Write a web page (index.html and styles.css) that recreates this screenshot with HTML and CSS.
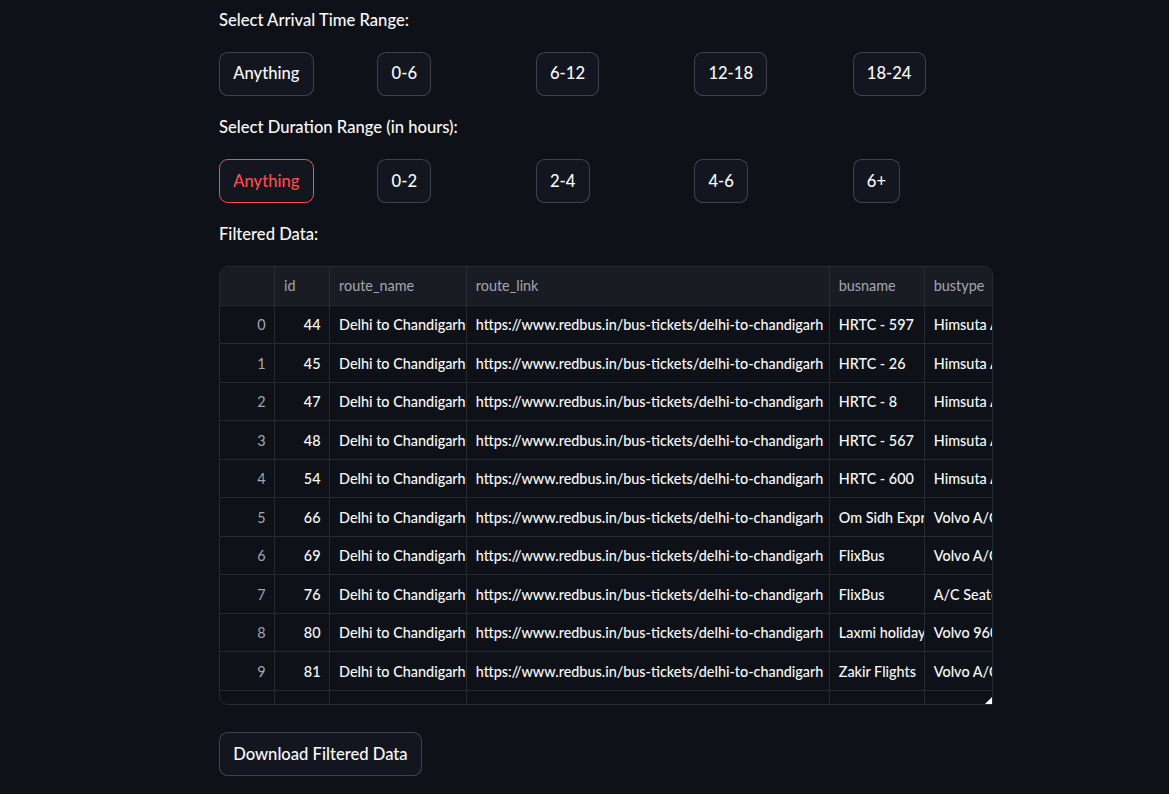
FILE: index.html
```html
<!DOCTYPE html>
<html lang="en">
<head>
<meta charset="utf-8">
<title>Bus Filter</title>
<link rel="stylesheet" href="styles.css">
</head>
<body>
<main class="page">
  <p class="label">Select Arrival Time Range:</p>
  <div class="btn-row">
    <div class="col"><button class="btn">Anything</button></div>
    <div class="col"><button class="btn">0-6</button></div>
    <div class="col"><button class="btn">6-12</button></div>
    <div class="col"><button class="btn">12-18</button></div>
    <div class="col"><button class="btn">18-24</button></div>
  </div>
  <p class="label">Select Duration Range (in hours):</p>
  <div class="btn-row">
    <div class="col"><button class="btn active">Anything</button></div>
    <div class="col"><button class="btn">0-2</button></div>
    <div class="col"><button class="btn">2-4</button></div>
    <div class="col"><button class="btn">4-6</button></div>
    <div class="col"><button class="btn">6+</button></div>
  </div>
  <p class="label">Filtered Data:</p>
  <div class="table-wrap">
    <div class="grid">
      <div class="hc"></div><div class="hc">id</div><div class="hc">route_name</div><div class="hc">route_link</div><div class="hc">busname</div><div class="hc">bustype</div>

      <div class="c idx">0</div><div class="c num">44</div><div class="c">Delhi to Chandigarh</div><div class="c">https://www.redbus.in/bus-tickets/delhi-to-chandigarh</div><div class="c">HRTC - 597</div><div class="c">Himsuta A/C Seater</div>
      <div class="c idx">1</div><div class="c num">45</div><div class="c">Delhi to Chandigarh</div><div class="c">https://www.redbus.in/bus-tickets/delhi-to-chandigarh</div><div class="c">HRTC - 26</div><div class="c">Himsuta A/C Seater</div>
      <div class="c idx">2</div><div class="c num">47</div><div class="c">Delhi to Chandigarh</div><div class="c">https://www.redbus.in/bus-tickets/delhi-to-chandigarh</div><div class="c">HRTC - 8</div><div class="c">Himsuta A/C Seater</div>
      <div class="c idx">3</div><div class="c num">48</div><div class="c">Delhi to Chandigarh</div><div class="c">https://www.redbus.in/bus-tickets/delhi-to-chandigarh</div><div class="c">HRTC - 567</div><div class="c">Himsuta A/C Seater</div>
      <div class="c idx">4</div><div class="c num">54</div><div class="c">Delhi to Chandigarh</div><div class="c">https://www.redbus.in/bus-tickets/delhi-to-chandigarh</div><div class="c">HRTC - 600</div><div class="c">Himsuta A/C Seater</div>
      <div class="c idx">5</div><div class="c num">66</div><div class="c">Delhi to Chandigarh</div><div class="c">https://www.redbus.in/bus-tickets/delhi-to-chandigarh</div><div class="c">Om Sidh Express</div><div class="c">Volvo A/C Seater</div>
      <div class="c idx">6</div><div class="c num">69</div><div class="c">Delhi to Chandigarh</div><div class="c">https://www.redbus.in/bus-tickets/delhi-to-chandigarh</div><div class="c">FlixBus</div><div class="c">Volvo A/C Seater</div>
      <div class="c idx">7</div><div class="c num">76</div><div class="c">Delhi to Chandigarh</div><div class="c">https://www.redbus.in/bus-tickets/delhi-to-chandigarh</div><div class="c">FlixBus</div><div class="c">A/C Seater</div>
      <div class="c idx">8</div><div class="c num">80</div><div class="c">Delhi to Chandigarh</div><div class="c">https://www.redbus.in/bus-tickets/delhi-to-chandigarh</div><div class="c">Laxmi holidays</div><div class="c">Volvo 9600</div>
      <div class="c idx">9</div><div class="c num">81</div><div class="c">Delhi to Chandigarh</div><div class="c">https://www.redbus.in/bus-tickets/delhi-to-chandigarh</div><div class="c">Zakir Flights</div><div class="c">Volvo A/C Seater</div>
      <div class="c idx">10</div><div class="c num">83</div><div class="c">Delhi to Chandigarh</div><div class="c">https://www.redbus.in/bus-tickets/delhi-to-chandigarh</div><div class="c">Laxmi holidays</div><div class="c">Volvo A/C Seater</div>
    </div>
    <span class="resize"></span>
  </div>
  <div class="download"><button class="btn">Download Filtered Data</button></div>
</main>
</body>
</html>
```

FILE: styles.css
```css
html, body {
  margin: 0;
  padding: 0;
  background: #0e1117;
}
body {
  color: #fafafa;
  font-family: Lato, "Noto Sans", "Liberation Sans", sans-serif;
  font-size: 16.6px;
  font-weight: 500;
}
.page {
  width: 774.4px;
  margin-left: 219px;
  padding-top: 6px;
  display: flex;
  flex-direction: column;
  gap: 17.6px;
}
.label {
  margin: 0;
  height: 28px;
  line-height: 28px;
}
.btn-row {
  display: grid;
  grid-template-columns: repeat(5, 1fr);
  gap: 17.6px;
}
.col {
  display: flex;
}
.btn {
  font: inherit;
  color: #fafafa;
  background: #13161e;
  border: 1px solid rgba(250, 250, 250, 0.2);
  border-radius: 8.8px;
  height: 44px;
  padding: 0 13.2px;
  line-height: 1.6;
  cursor: pointer;
}
.btn.active {
  color: #ff4b4b;
  border-color: #ff4b4b;
}
.table-wrap {
  position: relative;
  height: 439px;
  box-sizing: border-box;
  border: 1px solid #262a31;
  border-radius: 8.8px 8.8px 1px 8.8px;
  overflow: hidden;
}
.grid {
  display: grid;
  grid-template-columns: 55.3px 55px 136.7px 363px 95px 120px;
  grid-auto-rows: 38.5px;
  grid-template-rows: 39px;
  font-size: 14.4px;
}
.hc, .c {
  box-sizing: border-box;
  border-right: 1px solid #262a31;
  border-bottom: 1px solid #262a31;
  white-space: nowrap;
  overflow: hidden;
  display: flex;
  align-items: center;
  padding-left: 8.8px;
}
.hc {
  background: #1a1c24;
  color: #a3a6ad;
  font-weight: 400;
}
.c {
  color: #fafafa;
}
.c.idx, .c.num {
  justify-content: flex-end;
  padding-right: 8.8px;
}
.c.idx {
  color: #a3a6ad;
  font-weight: 400;
}
.resize {
  position: absolute;
  right: 0;
  bottom: 0;
  width: 0;
  height: 0;
  border-style: solid;
  border-width: 0 0 7px 7px;
  border-color: transparent transparent #fafafa transparent;
}
.download {
  margin-top: 9.4px;
  display: flex;
}
```
